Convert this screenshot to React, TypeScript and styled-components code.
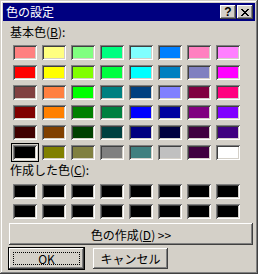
import styled, { createGlobalStyle } from 'styled-components';

const basicColors = [
  '#ff8080', '#ffff80', '#80ff80', '#00ff80', '#80ffff', '#0080ff', '#ff80c0', '#ff80ff',
  '#ff0000', '#ffff00', '#80ff00', '#00ff40', '#00ffff', '#0080c0', '#8080c0', '#ff00ff',
  '#804040', '#ff8040', '#00ff00', '#008080', '#004080', '#8080ff', '#800040', '#ff0080',
  '#800000', '#ff8000', '#008000', '#008040', '#0000ff', '#0000a0', '#800080', '#8000ff',
  '#400000', '#804000', '#004000', '#004040', '#000080', '#000040', '#400040', '#400080',
  '#000000', '#808000', '#808040', '#808080', '#408080', '#c0c0c0', '#400040', '#ffffff',
];

const customColors = Array.from({ length: 16 }, () => '#000000');

const SELECTED = 40;

const GlobalStyle = createGlobalStyle`
  html, body {
    margin: 0;
    padding: 0;
    background: #d4d0c8;
  }
  body {
    font-family: "Noto Sans CJK JP", "Noto Sans", sans-serif;
    font-size: 12px;
  }
`;

const raised = `
  box-shadow: inset -1px -1px #404040, inset 1px 1px #ffffff,
    inset -2px -2px #808080, inset 2px 2px #d4d0c8;
`;

const Window = styled.div`
  box-sizing: border-box;
  width: 258px;
  height: 274px;
  padding: 3px;
  background: #d4d0c8;
  box-shadow: inset -1px -1px #404040, inset 1px 1px #d4d0c8,
    inset -2px -2px #808080, inset 2px 2px #ffffff;
  display: flex;
  flex-direction: column;
`;

const TitleBar = styled.div`
  height: 18px;
  background: #000080;
  display: flex;
  align-items: center;
  padding: 0 2px 0 3px;
`;

const Title = styled.span`
  flex: 1;
  color: #ffffff;
  font-size: 12px;
  line-height: 18px;
`;

const TitleButton = styled.button`
  box-sizing: border-box;
  width: 16px;
  height: 14px;
  padding: 0;
  margin-left: 1px;
  border: 0;
  background: #d4d0c8;
  ${raised}
  display: flex;
  align-items: center;
  justify-content: center;
  font-family: "Liberation Sans", sans-serif;
  font-weight: bold;
  font-size: 12px;
  line-height: 12px;
  color: #000000;
`;

const Body = styled.div`
  flex: 1;
  display: flex;
  flex-direction: column;
  align-items: flex-start;
  padding: 4px 2px 0 6px;
`;

const SectionLabel = styled.div<{ $gap: number; $top?: number }>`
  height: 14px;
  line-height: 14px;
  margin: ${(p) => p.$top ?? 0}px 0 ${(p) => p.$gap}px 1px;
  color: #000000;
`;

const SwatchGrid = styled.div`
  display: grid;
  grid-template-columns: repeat(8, 24px);
  grid-auto-rows: 15px;
  column-gap: 5px;
  row-gap: 5px;
  margin-left: 4px;
`;

const Swatch = styled.div<{ $color: string; $selected?: boolean }>`
  box-sizing: border-box;
  background: ${(p) => p.$color};
  box-shadow: inset 1px 1px #808080, inset -1px -1px #ffffff,
    inset 2px 2px #404040, inset -2px -2px #d4d0c8;
  outline: ${(p) => (p.$selected ? '1px solid #000000' : 'none')};
  outline-offset: 1px;
`;

const PushButton = styled.button<{ $width: number; $height: number }>`
  box-sizing: border-box;
  width: ${(p) => p.$width}px;
  height: ${(p) => p.$height}px;
  padding: 0;
  border: 0;
  background: #d4d0c8;
  ${raised}
  font-family: "Noto Sans CJK JP", "Noto Sans", sans-serif;
  font-size: 12px;
  color: #000000;
`;

const CreateButton = styled(PushButton)`
  margin-top: 4px;
`;

const Footer = styled.div`
  display: flex;
  gap: 9px;
  margin-top: 3px;
`;

const DefaultButton = styled(PushButton)`
  outline: 1px solid #000000;
  padding: 4px;
`;

const FocusRing = styled.span`
  box-sizing: border-box;
  display: flex;
  align-items: center;
  justify-content: center;
  width: 100%;
  height: 100%;
  border: 1px dotted #000000;
`;

const CloseGlyph = () => (
  <svg width="8" height="7" viewBox="0 0 8 7" shapeRendering="crispEdges">
    <path
      d="M0 0h2v1H0zM6 0h2v1H6zM1 1h2v1H1zM5 1h2v1H5zM2 2h4v1H2zM3 3h2v1H3zM2 4h4v1H2zM1 5h2v1H1zM5 5h2v1H5zM0 6h2v1H0zM6 6h2v1H6z"
      fill="#000000"
    />
  </svg>
);

export default function App() {
  return (
    <>
      <GlobalStyle />
      <Window>
        <TitleBar>
          <Title>色の設定</Title>
          <TitleButton>?</TitleButton>
          <TitleButton>
            <CloseGlyph />
          </TitleButton>
        </TitleBar>
        <Body>
          <SectionLabel $gap={6}>
            基本色(<u>B</u>):
          </SectionLabel>
          <SwatchGrid>
            {basicColors.map((c, i) => (
              <Swatch key={i} $color={c} $selected={i === SELECTED} />
            ))}
          </SwatchGrid>
          <SectionLabel $top={3} $gap={7}>
            作成した色(<u>C</u>):
          </SectionLabel>
          <SwatchGrid>
            {customColors.map((c, i) => (
              <Swatch key={i} $color={c} />
            ))}
          </SwatchGrid>
          <CreateButton $width={244} $height={22}>
            色の作成(<u>D</u>) &gt;&gt;
          </CreateButton>
          <Footer>
            <DefaultButton $width={75} $height={21}>
              <FocusRing>OK</FocusRing>
            </DefaultButton>
            <PushButton $width={75} $height={21}>
              キャンセル
            </PushButton>
          </Footer>
        </Body>
      </Window>
    </>
  );
}
